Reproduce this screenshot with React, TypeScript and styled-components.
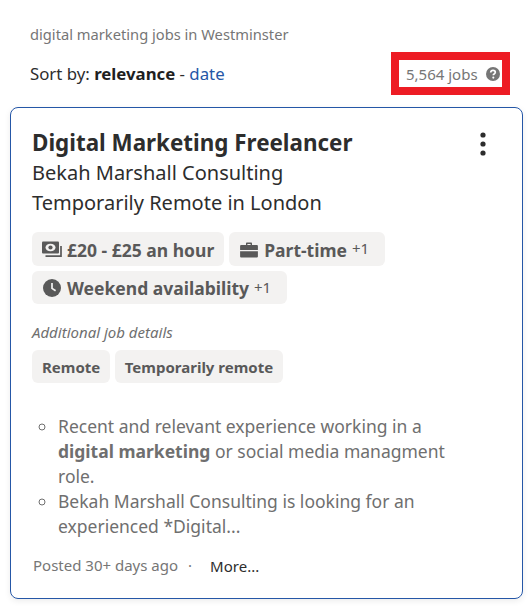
import React from "react";
import styled, { createGlobalStyle } from "styled-components";

const Global = createGlobalStyle`
  html, body { margin: 0; padding: 0; background: #fff; }
  body { font-family: "Noto Sans", "Open Sans", sans-serif; color: #2d2d2d; }
`;

const Page = styled.div`
  width: 532px;
  height: 609px;
  overflow: hidden;
  box-sizing: border-box;
  padding: 25px 9px 0 10px;
`;

const Query = styled.div`
  font-size: 14.7px;
  line-height: 19px;
  color: #767676;
  padding-left: 20px;
`;

const SortRow = styled.div`
  display: flex;
  justify-content: space-between;
  align-items: center;
  margin-top: 8px;
  padding: 0 13px 0 20px;
`;

const Sort = styled.div`
  font-size: 16.8px;
  line-height: 22px;
  color: #2d2d2d;
  b { font-weight: 700; color: #1f1f1f; }
  a { color: #2557a7; text-decoration: none; }
`;

const Count = styled.div`
  display: flex;
  align-items: center;
  justify-content: space-between;
  box-sizing: border-box;
  width: 119px;
  height: 43px;
  border: 8px solid #ed1c24;
  padding: 0 2px 0 7px;
  font-size: 15px;
  color: #767676;
`;

const Card = styled.article`
  margin-top: 12px;
  box-sizing: border-box;
  width: 513px;
  height: 492px;
  border: 1px solid #2557a7;
  border-radius: 8px;
  box-shadow: 0 2px 6px rgba(0, 0, 0, 0.08);
  padding: 20px 21px 0;
`;

const TitleRow = styled.div`
  display: flex;
  justify-content: space-between;
  align-items: flex-start;
`;

const Title = styled.h2`
  margin: 0;
  font-size: 22.4px;
  line-height: 30px;
  font-weight: 700;
  color: #2d2d2d;
`;

const Kebab = styled.svg`
  width: 24px;
  height: 24px;
  margin: 4px 6px 0 0;
  flex: none;
`;

const InfoLine = styled.div`
  font-size: 20px;
  line-height: 30px;
  color: #2d2d2d;
`;

const Chips = styled.div`
  display: flex;
  flex-wrap: wrap;
  gap: 5px;
  margin-top: 14px;
`;

const Chip = styled.div<{ $height: number }>`
  display: inline-flex;
  align-items: center;
  height: ${(p) => p.$height}px;
  box-sizing: border-box;
  padding: 1px 10px 0;
  gap: 5px;
  background: #f3f2f1;
  border-radius: 6px;
  font-size: 17.5px;
  font-weight: 700;
  color: #595959;
  svg { flex: none; }
  span { font-size: 15px; font-weight: 400; padding: 0 5.5px 3px 0; }
`;

const DetailsLabel = styled.div`
  margin-top: 19px;
  font-size: 15px;
  line-height: 19px;
  font-style: italic;
  color: #6f6f6f;
`;

const SmallChips = styled.div`
  display: flex;
  gap: 5px;
  margin-top: 8px;
`;

const SmallChip = styled.div`
  display: flex;
  align-items: center;
  height: 33px;
  padding: 0 9.5px 0 10px;
  background: #f3f2f1;
  border-radius: 6px;
  font-size: 15px;
  font-weight: 700;
  color: #595959;
`;

const Bullets = styled.ul`
  margin: 31px 0 0;
  padding: 0 0 0 26px;
  width: 410px;
  list-style: circle;
  font-size: 17.5px;
  line-height: 25px;
  color: #6f6f6f;
  b { font-weight: 700; }
  li::marker { color: #6f6f6f; }
`;

const Footer = styled.div`
  display: flex;
  align-items: center;
  margin: 16px 0 0 1px;
  font-size: 15px;
  line-height: 19px;
  color: #767676;
`;

const Dot = styled.span`
  margin: 0 18px 0 10px;
`;

const More = styled.a`
  color: #2d2d2d;
  text-decoration: none;
  padding-top: 2px;
`;

const Help = () => (
  <svg width="14" height="14" viewBox="0 0 14 14">
    <circle cx="7" cy="7" r="7" fill="#767676" />
    <path d="M4.7 5.5C4.8 4.1 5.8 3.3 7 3.3c1.3 0 2.3.8 2.3 1.9 0 1-.6 1.4-1.2 1.8-.5.3-.8.6-.8 1.3" fill="none" stroke="#fff" strokeWidth="1.7" />
    <circle cx="7.3" cy="10.6" r="1.05" fill="#fff" />
  </svg>
);

const MoneyIcon = () => (
  <svg width="20" height="17" viewBox="0 0 20 17">
    <rect x="0" y="0.5" width="17" height="12" rx="1" fill="#595959" />
    <ellipse cx="8.5" cy="6.5" rx="5" ry="3.8" fill="#f3f2f1" />
    <circle cx="8.5" cy="6.5" r="2.1" fill="#595959" />
    <path d="M19 5v10.2H3.5" fill="none" stroke="#595959" strokeWidth="1.7" />
  </svg>
);

const CaseIcon = () => (
  <svg width="20" height="16" viewBox="-1 0 20 16">
    <path d="M6 3V1.6C6 1 6.4.6 7 .6h4c.6 0 1 .4 1 1V3h5c.5 0 .9.4.9.9V8H.1V3.9C.1 3.4.5 3 1 3h5zm1.4 0h3.2V2H7.4v1z" fill="#595959" fillRule="evenodd" />
    <path d="M.1 9.3h17.8v5.3c0 .5-.4.9-.9.9H1c-.5 0-.9-.4-.9-.9V9.3z" fill="#595959" />
  </svg>
);

const ClockIcon = () => (
  <svg width="20" height="18" viewBox="-1 0 20 18">
    <circle cx="9" cy="9" r="9" fill="#595959" />
    <path d="M9 4v5.4l3.6 2.4" fill="none" stroke="#f3f2f1" strokeWidth="1.7" />
  </svg>
);

export default function App() {
  return (
    <Page>
      <Global />
      <Query>digital marketing jobs in Westminster</Query>
      <SortRow>
        <Sort>
          Sort by: <b>relevance</b> - <a href="#date">date</a>
        </Sort>
        <Count>
          5,564 jobs
          <Help />
        </Count>
      </SortRow>
      <Card>
        <TitleRow>
          <Title>Digital Marketing Freelancer</Title>
          <Kebab viewBox="0 0 24 24" aria-hidden="true">
            <circle cx="12" cy="3" r="2.6" fill="#2d2d2d" />
            <circle cx="12" cy="12" r="2.6" fill="#2d2d2d" />
            <circle cx="12" cy="21" r="2.6" fill="#2d2d2d" />
          </Kebab>
        </TitleRow>
        <InfoLine>Bekah Marshall Consulting</InfoLine>
        <InfoLine>Temporarily Remote in London</InfoLine>
        <Chips>
          <Chip $height={34}>
            <MoneyIcon />
            £20 - £25 an hour
          </Chip>
          <Chip $height={34}>
            <CaseIcon />
            Part-time <span>+1</span>
          </Chip>
          <Chip $height={33}>
            <ClockIcon />
            Weekend availability <span>+1</span>
          </Chip>
        </Chips>
        <DetailsLabel>Additional job details</DetailsLabel>
        <SmallChips>
          <SmallChip>Remote</SmallChip>
          <SmallChip>Temporarily remote</SmallChip>
        </SmallChips>
        <Bullets>
          <li>
            Recent and relevant experience working in a <b>digital marketing</b> or social media managment role.
          </li>
          <li>Bekah Marshall Consulting is looking for an experienced *Digital...</li>
        </Bullets>
        <Footer>
          Posted 30+ days ago
          <Dot>·</Dot>
          <More href="#more">More...</More>
        </Footer>
      </Card>
    </Page>
  );
}
